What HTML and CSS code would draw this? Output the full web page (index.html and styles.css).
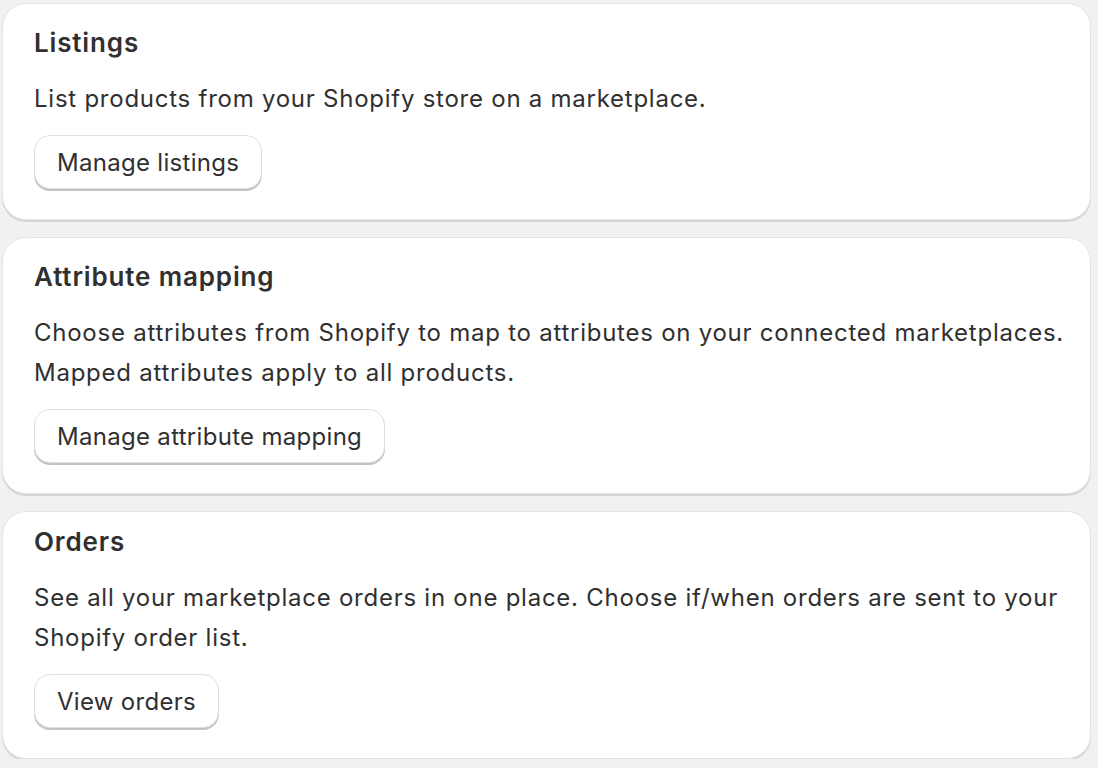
FILE: index.html
```html
<!DOCTYPE html>
<html lang="en">
<head>
<meta charset="utf-8">
<title>Marketplace settings</title>
<link rel="stylesheet" href="styles.css">
</head>
<body>
<main class="stack">
  <section class="card">
    <h2 class="card-title">Listings</h2>
    <p class="card-text">List products from your Shopify store on a marketplace.</p>
    <button class="btn" type="button">Manage listings</button>
  </section>
  <section class="card">
    <h2 class="card-title">Attribute mapping</h2>
    <p class="card-text">Choose attributes from Shopify to map to attributes on your connected marketplaces. Mapped attributes apply to all products.</p>
    <button class="btn" type="button">Manage attribute mapping</button>
  </section>
  <section class="card card-tight">
    <h2 class="card-title">Orders</h2>
    <p class="card-text">See all your marketplace orders in one place. Choose if/when orders are sent to your Shopify order list.</p>
    <button class="btn" type="button">View orders</button>
  </section>
</main>
</body>
</html>
```
FILE: styles.css
```css
html, body {
  margin: 0;
  padding: 0;
  background: #f1f1f1;
}
body {
  font-family: Inter, "Noto Sans", "Liberation Sans", sans-serif;
  color: #303030;
}
.stack {
  display: flex;
  flex-direction: column;
  gap: 17px;
  width: 1089px;
  margin: 3px 0 0 2px;
}
.card {
  box-sizing: border-box;
  background: #fff;
  border: 1px solid #e4e4e4;
  border-radius: 24px;
  box-shadow: 0 2px 0 #d6d6d6;
  padding: 23px 12px 30px 31px;
  display: flex;
  flex-direction: column;
  align-items: flex-start;
}
.card-tight {
  padding-top: 14px;
}
.card-title {
  margin: 0;
  font-size: 26px;
  line-height: 32px;
  font-weight: 600;
  letter-spacing: 0.85px;
  color: #303030;
}
.card-text {
  margin: 20px 0 0;
  font-size: 24px;
  line-height: 40px;
  font-weight: 400;
  letter-spacing: 0.75px;
}
.btn {
  margin-top: 16px;
  box-sizing: border-box;
  height: 54px;
  padding: 0 22px;
  background: #fff;
  border: 1px solid #e0e0e0;
  border-radius: 16px;
  box-shadow: 0 2px 0 #c2c2c2;
  font-family: inherit;
  font-size: 24px;
  font-weight: 400;
  letter-spacing: 0.3px;
  color: #303030;
}
```
